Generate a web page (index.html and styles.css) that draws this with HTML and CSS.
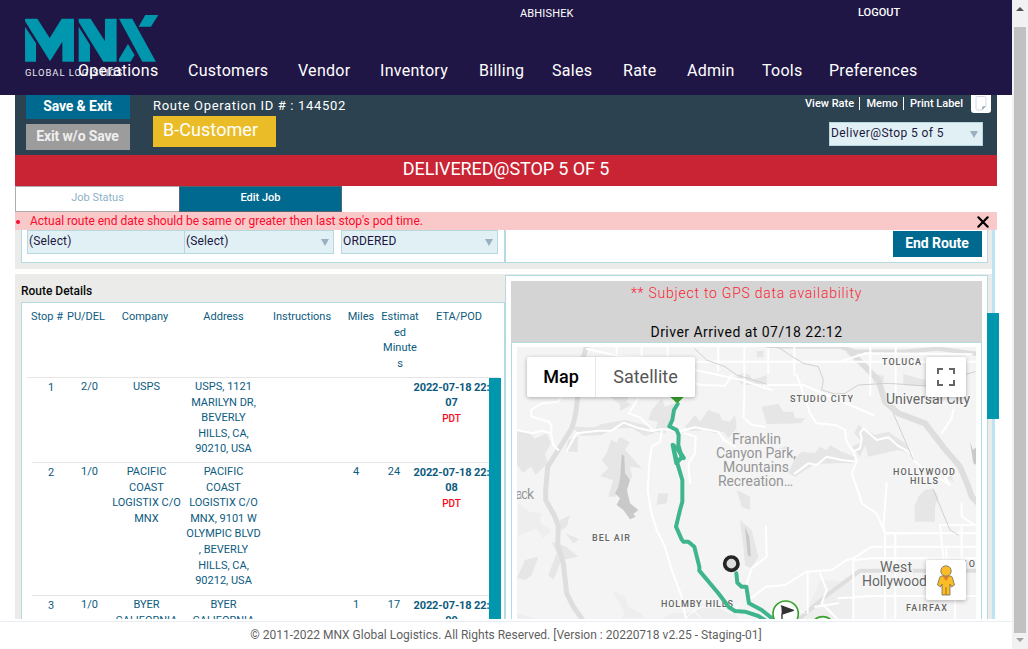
FILE: index.html
```html
<!DOCTYPE html>
<html lang="en">
<head>
<meta charset="utf-8">
<title>MNX Global Logistics</title>
<link rel="stylesheet" href="styles.css">
</head>
<body>
<div class="window">
<div class="page">
  <header class="header">
    <div class="brand">
      <svg class="logo" viewBox="75 45 400 142" aria-label="MNX"><g fill="#0096ad"><path d="M75 56H112L149 114L185 56H222V185H187V125L150 184L75 64ZM75 80L108 130V185H75Z"/><path d="M236 56H272L315 124V56H350V185H310L236 66ZM236 80L270 134V185H236Z"/><path d="M357 56H397L468 185H427ZM384 132L404 165L392 185H357V177ZM436 45H475L453 80H416Z"/></g></svg>
      <div class="tagline">GLOBAL LOGISTICS</div>
    </div>
    <div class="user">ABHISHEK</div>
    <div class="logout">LOGOUT</div>
    <nav class="nav"><a>Operations</a><a>Customers</a><a>Vendor</a><a>Inventory</a><a>Billing</a><a>Sales</a><a>Rate</a><a>Admin</a><a>Tools</a><a>Preferences</a></nav>
  </header>
  <main class="content">
    <section class="toolbar">
      <div class="actions"><button class="btn save">Save &amp; Exit</button><button class="btn exit">Exit w/o Save</button></div>
      <div class="ident"><div class="rid">Route Operation ID # : 144502</div><div class="customer">B-Customer</div></div>
      <div class="tools">
        <div class="links"><a>View Rate</a><a>Memo</a><a>Print Label</a><span class="note"><svg viewBox="0 0 20 18"><path d="M5 2.500Q5 1.500 6 1.500H13.500Q15 1.500 15 3V11L11 15H6.500Q5 15 5 13.500Z" fill="#fff" stroke="#d4d8e4"/><path d="M11 15L11.500 11.500L15 11Z" fill="#8fa3b5"/></svg></span></div>
        <div class="select stopsel"><span>Deliver@Stop 5 of 5</span><i></i></div>
      </div>
    </section>
    <div class="status">DELIVERED@STOP 5 OF 5</div>
    <div class="tabs"><div class="tab">Job Status</div><div class="tab on">Edit Job</div></div>
    <div class="error"><b></b><span>Actual route end date should be same or greater then last stop's pod time.</span>
      <svg class="close" viewBox="0 0 12 12"><path d="M2 2L10 10M10 2L2 10" stroke="#000" stroke-width="1.900" stroke-linecap="round"/></svg></div>
    <div class="scroller">
      <div class="panes">
        <section class="panel route">
          <div class="routebox">
            <div class="fields"><div class="select s1"><span>(Select)</span></div><div class="select s2"><span>(Select)</span><i></i></div><div class="select s3"><span>ORDERED</span><i></i></div></div>
            <div class="endcell"><button class="btn end">End Route</button></div>
          </div>
        </section>
        <section class="panel details">
          <div class="left">
            <h2>Route Details</h2>
            <div class="tablebox">
              <div class="row head"><span>Stop #</span><span>PU/DEL</span><span>Company</span><span>Address</span><span>Instructions</span><span>Miles</span><span>Estimat<br>ed<br>Minute<br>s</span><span>ETA/POD</span></div>
              <div class="body">
                <div class="rows">
                  <div class="row r1"><span class="num">1</span><span>2/0</span><span>USPS</span><span>USPS, 1121<br>MARILYN DR,<br>BEVERLY<br>HILLS, CA,<br>90210, USA</span><span></span><span></span><span></span><span class="eta">2022-07-18 22:<br>07<br><em>PDT</em></span></div>
                  <div class="row r2"><span class="num">2</span><span>1/0</span><span>PACIFIC<br>COAST<br>LOGISTIX C/O<br>MNX</span><span>PACIFIC<br>COAST<br>LOGISTIX C/O<br>MNX, 9101 W<br>OLYMPIC BLVD<br>, BEVERLY<br>HILLS, CA,<br>90212, USA</span><span></span><span>4</span><span>24</span><span class="eta">2022-07-18 22:<br>08<br><em>PDT</em></span></div>
                  <div class="row r3"><span class="num">3</span><span>1/0</span><span>BYER<br>CALIFORNIA</span><span>BYER<br>CALIFORNIA</span><span></span><span>1</span><span>17</span><span class="eta">2022-07-18 22:<br>09</span></div>
                </div>
                <div class="thumb"></div>
              </div>
            </div>
          </div>
          <div class="right">
            <div class="gps"><p class="warn">** Subject to GPS data availability</p><p class="arrived">Driver Arrived at 07/18 22:12</p></div>
            <div class="mapframe"><div class="map">
              <svg class="tiles" viewBox="517 347 459 272">
                <rect x="517" y="347" width="459" height="272" fill="#f4f4f4"/>
                <g transform="translate(505 330) scale(.33333)" fill="none" stroke-linejoin="round" stroke-linecap="round">
                  <g fill="#e6e6e6">
                    <path d="M36 300L75 308L88 326L125 310L138 340L120 372L128 400L92 435L78 410L54 428L36 405ZM190 330L220 318L218 367L180 363ZM200 290L270 292L290 282L360 270L440 290L450 310L420 318L380 294L330 295L290 315L230 318ZM440 240L470 205L480 230L510 220L500 280L480 310L450 305L458 275L430 270ZM315 200H370L364 215L380 223L346 244L344 222ZM540 290L570 255L585 275L610 240L645 252L650 270L675 275L690 255L695 295L670 325L655 305L630 310L600 300L555 304Z"/>
                    <path d="M290 390L305 370L318 330L335 338L345 320L374 336L360 360L410 415L375 410L382 440L330 500H310L324 450L285 438L310 415ZM755 63H775V82H755ZM690 145L715 127L735 135L740 150L785 136V160L715 166Z"/>
                    <path d="M770 230L820 222L835 245L865 245L870 265L900 265L888 280L785 282ZM870 383L890 365L930 370L945 350L965 360L975 345L1010 365L1050 380L1048 400L990 400L930 402L870 440L850 430ZM1040 350L1070 335L1048 310L1060 285L1110 315L1150 305L1200 340L1215 370L1180 360L1090 380L1080 345L1065 380ZM1108 132L1136 138V155L1105 158ZM1195 132L1260 150L1268 170L1195 166ZM1320 420L1340 435L1345 455L1328 448ZM820 357L845 348L848 360Z"/>
                    <path d="M157 575L195 555L185 590L170 600ZM182 610L222 628L205 640ZM183 650L220 680L170 690L145 750L130 735L155 670L140 635ZM36 745L60 690L100 680L80 735L60 750ZM695 480L735 500L735 540L710 530ZM705 570L740 600L760 680L738 715L720 706L715 650ZM1228 530L1240 500L1260 480L1285 475L1300 500L1290 530L1290 575H1230ZM460 490L490 490L485 520L455 525Z"/>
                    <path d="M40 520L75 545L110 550L105 580L140 600L115 625L95 595L40 618ZM320 780L360 800L370 830L405 850L420 865H350L360 850ZM36 850L95 867H36ZM470 867L500 850L565 848L590 820L640 825L690 845L700 867ZM945 750L1045 755L1045 867H900L910 835Z" fill="#eee"/>
                  </g>
                  <path d="M340 470L346 440L350 372L358 378L360 430L375 450L366 480L375 520L400 540L385 552L392 560L375 568L355 540L335 525L345 505L330 490ZM720 590L733 620L738 680L728 675ZM1395 335L1404 360L1415 350V405L1405 400Z" fill="#c9c9c9"/>
                  <g stroke="#dedede" stroke-width="18"><path d="M244 51L230 100L218 180Q217 250 200 295L160 360L128 410L122 480V510L150 560L160 590L158 640L175 700L185 790L205 830L240 880" stroke-width="15"/><path d="M1035 65L1120 150L1140 215L1180 250L1260 280L1318 355L1365 410L1390 470L1400 500L1425 525L1440 535"/><path d="M820 50H1005L1050 65H1200L1300 56L1420 72" stroke-width="13"/><path d="M870 878L960 800L1065 722H1420" stroke-width="12"/></g>
                  <g stroke="#fff" stroke-width="6">
                    <path d="M246 57L340 78L570 95L950 95H1420M335 51V78M410 52V83M488 51V120M570 120L710 150L800 180M640 52V120M718 52V210L715 262L740 285L780 290M790 51V130M868 51V135M1096 51V195M1172 51V190M1005 95L1080 70L1400 73M780 165H895L1105 255M510 145L590 165L660 167L680 135"/>
                    <path d="M36 300L80 310L110 302L138 310L140 290L132 275L80 260L78 240L110 220L160 215L185 178M138 310L145 345L160 360M185 362L215 310L280 302L320 302L355 278L400 294L440 303L470 297L525 304L570 292L640 305L655 328L690 350M400 205L372 250L405 262L445 302M470 304L466 335L440 350L433 400L428 480L438 545L455 600L480 650L500 720L530 800L545 880"/>
                    <path d="M540 310L572 320L570 370L550 400L555 460M870 430L910 400L935 405L965 380L1010 390L1055 395L1045 365L1065 355L1070 325L1065 310L1075 295L1115 330L1150 322L1180 348L1220 370L1225 390L1260 420L1335 465L1320 445L1345 420M1055 395L1040 430L1065 500L1070 520L1115 550L1140 610L1200 610M875 135L895 190L915 250L935 280L995 286L1020 300L1025 335L1048 370L1055 395M1310 310L1340 265L1345 240"/>
                    <path d="M783 770L840 765L905 725L980 720L1025 690L1045 685L1100 650H1410M1140 610H1410M1145 460L1135 590L1140 610V867M1171 610V867M1045 690V870M1324 650V770L1305 585H1410L1370 560V520M1370 585V700M1045 690L1100 685H1410M1000 805L1100 798H1410M908 730V850M945 730L965 780L950 820L1000 870M930 830L1000 820M783 590L785 680L740 715L725 760L730 800M730 810L783 770M1350 790V868"/>
                    <path d="M540 867L570 840L620 820L680 850L705 820M565 840L590 867M820 867L860 830L900 850" stroke-width="3"/>
                  </g>
                  <path d="M570 57L605 90L660 110L695 135L740 148L785 163M785 52H820L870 85L895 100L940 110L955 150L950 180L990 192L1020 190L1060 165L1150 160L1265 168L1410 125M1165 250L1225 390M1285 480L1335 600L1360 615" stroke="#c9c9c9" stroke-width="2.500"/>
                </g>
                <g class="labels">
                  <text x="882" y="365" textLength="39">TOLUCA</text><text x="790" y="402" textLength="63">STUDIO CITY</text><text x="893" y="475" textLength="62">HOLLYWOOD</text><text x="910" y="484" textLength="28">HILLS</text><text x="592" y="541" textLength="38">BEL AIR</text><text x="661" y="607" textLength="72">HOLMBY HILLS</text><text x="906" y="611" textLength="41">FAIRFAX</text><text x="964" y="567" textLength="11">IO</text>
                </g>
                <g class="towns"><text x="886" y="404" textLength="84">Universal City</text><text x="880" y="572" textLength="32">West</text><text x="862" y="586" textLength="65">Hollywood</text></g>
                <g class="parks"><text x="732" y="444" textLength="49">Franklin</text><text x="716" y="458" textLength="80">Canyon Park,</text><text x="723" y="472" textLength="66">Mountains</text><text x="718" y="486" textLength="75">Recreation…</text><text x="515" y="499" textLength="19">ack</text></g>
                <g transform="translate(505 330) scale(.33333)" fill="none" stroke-linejoin="round" stroke-linecap="round">
                  <g stroke="#3fb58d" stroke-width="12"><path d="M518 222L507 240L502 270L493 289L515 300L521 315L520 345L530 382L514 400L503 345L520 410L532 450V515L525 540L513 590L530 628L535 635H550L568 650L583 710V722L600 742L640 790L672 832L690 843L720 845L760 858L820 895"/><path d="M504 345L520 360L536 384" stroke-width="13"/><path d="M694 730L697 758L710 770L724 770L732 820L770 840L820 880"/></g>
                  <circle cx="679" cy="701" r="20" fill="#ddd" stroke="#242424" stroke-width="11"/>
                  <path d="M496 201H536L525 212Q516 224 508 212Z" fill="#39a32f"/>
                  <g fill="#fff" stroke="#39a32f" stroke-width="5"><circle cx="842" cy="851" r="38"/><circle cx="953" cy="896" r="36"/></g>
                  <path d="M829 828L865 841L831 852V867" stroke="#333" stroke-width="4" fill="#333"/>
                </g>
              </svg>
              <div class="maptype"><span>Map</span><span>Satellite</span></div>
              <div class="mapbtn full"><svg viewBox="0 0 18 18"><path d="M1 6V1H6M12 1H17V6M17 12V17H12M6 17H1V12" fill="none" stroke="#666" stroke-width="2"/></svg></div>
              <div class="mapbtn peg"><svg viewBox="0 0 18 31"><g fill="#fbbc26" stroke="#6c6a63" stroke-width=".8"><path d="M4.500 11H13.500Q15 11 15.500 13L17.500 20L14.500 22L13 19V30H5V19L3.500 22L.5 20L2.500 13Q3 11 4.500 11Z"/><circle cx="9" cy="6" r="5.200"/></g><path d="M6 11.400H12L9 16Z" fill="#e37c2c"/><path d="M9 22V30" stroke="#8a641d" stroke-width=".8"/></svg></div>
            </div></div>
          </div>
        </section>
      </div>
      <div class="track"><div class="handle"></div></div>
    </div>
  </main>
  <footer class="footer">© 2011-2022 MNX Global Logistics. All Rights Reserved. [Version : 20220718 v2.25 - Staging-01]</footer>
</div>
<div class="winbar"><i class="up"></i><div class="grip"></div><i class="down"></i></div>
</div>
</body>
</html>
```
FILE: styles.css
```css
* { box-sizing: border-box; }
body { margin: 0; font-family: Roboto, sans-serif; background: #fff; overflow: hidden; }
h2, p { margin: 0; }
button { border: 0; padding: 0; font-family: inherit; }
svg { display: block; }
.window { display: flex; width: 1028px; height: 649px; }
.page { width: 1012px; display: flex; flex-direction: column; }
.header { position: relative; height: 95px; flex: none; background: #1f1646; color: #fff; display: flex; }
.brand { padding: 15px 0 0 25px; width: 520px; }
.logo { width: 133.3px; height: 47.3px; }
.tagline { font-size: 9.5px; line-height: 12px; padding-top: 5px; letter-spacing: .9px; opacity: .9; white-space: nowrap; }
.user { width: 338px; padding-top: 7px; font-size: 11px; line-height: 13px; letter-spacing: .15px; }
.logout { padding-top: 6px; font-size: 11px; line-height: 13px; font-weight: 500; }
.nav { position: absolute; left: 78px; top: 61px; display: grid; grid-template-columns: 80px 80px 52px 69px 43px 41px 34px 45px 37px 92px; gap: 30px; font-size: 16px; line-height: 20px; letter-spacing: .28px; white-space: nowrap; }
.content { width: 982px; margin-left: 15px; height: 524px; flex: none; display: flex; flex-direction: column; }
.toolbar { height: 60px; flex: none; background: #2c4251; color: #fff; display: flex; }
.actions { width: 138px; padding-left: 11px; display: flex; flex-direction: column; gap: 5px; }
.btn { width: 104px; height: 26px; color: #fff; font-size: 14px; font-weight: 700; line-height: 25px; letter-spacing: -.15px; text-align: center; padding-right: 1px; }
.save { background: #006990; height: 24px; line-height: 20px; padding-bottom: 2px; }
.exit { background: #9c9c9c; color: #efefef; padding-bottom: 1px; }
.ident { width: 638px; }
.rid { height: 21px; line-height: 21px; font-size: 13px; letter-spacing: .68px; }
.customer { width: 123px; height: 31px; background: #eabd28; padding-left: 10px; font-size: 18px; line-height: 27px; letter-spacing: .05px; }
.tools { display: flex; flex-direction: column; gap: 9px; }
.links { display: flex; height: 18px; padding-left: 14px; font-size: 11px; line-height: 17px; font-weight: 500; white-space: nowrap; }
.links a { position: relative; padding-right: 12.300px; }
.links a + a::before { content: ""; position: absolute; left: -7px; top: 2px; width: 1px; height: 13px; background: #fff; }
.links a:nth-child(3) { padding-right: 8px; }
.note { width: 20px; height: 18px; background: #fff; border-radius: 0 0 3px 3px; }
.select { height: 24px; border: 1px solid #b5d9df; background: #e1f0f4; color: #1c1742; font-size: 12px; line-height: 20px; padding: 0 4px 0 1px; display: flex; justify-content: space-between; letter-spacing: .15px; }
.select i { margin-top: 8px; width: 8px; height: 7px; background: #98b0c0; clip-path: polygon(0 0, 100% 0, 50% 100%); }
.stopsel { width: 154px; margin-left: 38px; letter-spacing: .42px; }
.status { height: 31px; flex: none; background: #c82434; color: #fff; text-align: center; font-size: 18px; line-height: 27px; letter-spacing: -.1px; }
.tabs { height: 26px; flex: none; display: flex; font-size: 11px; line-height: 21px; text-align: center; }
.tab { width: 164px; border: 1px solid #adadad; border-right: 0; color: #8db3c8; }
.tab.on { width: 163px; background: #006990; border: 1px solid #58646d; color: #fff; font-weight: 500; }
.error { height: 18px; flex: none; display: flex; align-items: center; background: #f9c9c9; color: #fa0a2d; font-size: 12px; line-height: 18px; padding-left: 1px; }
.error b { width: 4px; height: 4px; border-radius: 2px; background: #fa0a2d; margin-right: 10px; margin-top: 2px; }
.close { width: 14px; height: 14px; margin-left: auto; margin-right: 7px; margin-top: 2px; }
.scroller { display: flex; height: 389px; }
.panes { width: 977px; display: flex; flex-direction: column; gap: 5px; overflow: hidden; }
.panel { background: #ebecea; }
.route { height: 39px; flex: none; padding: 0 4px 6px 6px; }
.routebox { height: 33px; display: flex; background: #fff; border: 1px solid #b5dbe2; border-top: 0; }
.fields { width: 484px; border-right: 2px solid #b5dbe2; padding-left: 5px; display: flex; }
.s1 { width: 158px; }
.s2 { width: 150px; margin-left: -1px; }
.s3 { width: 157px; margin-left: 7px; }
.endcell { flex: 1; display: flex; justify-content: flex-end; padding: 1px 5px 0 0; }
.end { width: 89px; background: #006990; padding-bottom: 1px; letter-spacing: -.05px; }
.details { height: 345px; display: flex; padding-left: 6px; }
.left { width: 484px; }
h2 { height: 28px; padding-top: 9px; font-size: 12px; line-height: 16px; font-weight: 500; color: #080808; letter-spacing: -.02px; }
.tablebox { height: 317px; background: #fff; border: 1px solid #b5dbe2; border-width: 1px 1px 0; padding: 0 5px; color: #0c5b80; font-size: 11px; line-height: 15.600px; text-align: center; }
.row { display: grid; grid-template-columns: 38px 39px 75px 79px 75px 36px 40px 75px; white-space: nowrap; padding-top: 1px; }
.row span { justify-self: center; }
.head { height: 75px; padding-top: 6px; border-bottom: 1px solid #e5e5e5; grid-template-columns: 40px 38px 80px 77px 80px 38px 40px 78px; }
.body { display: flex; height: 241px; }
.rows { width: 462px; flex: none; overflow: hidden; }
.body .row { margin-left: 5px; border-bottom: 1px solid #e5e5e5; }
.r1 { height: 85px; }
.r2, .r3 { height: 133px; }
.num { padding-top: .5px; }
.eta { font-weight: 700; letter-spacing: -.12px; padding-top: .6px; }
.eta em { font-style: normal; font-weight: 500; font-size: 10px; color: #fa0a20; }
.thumb { width: 12px; flex: none; background: #0096ad; }
.right { width: 483px; height: 344px; margin-top: 1px; background: #fff; border: 1px solid #b5dbe2; border-bottom: 0; padding: 5px; }
.gps { height: 61px; background: #d4d4d4; text-align: center; white-space: nowrap; }
.warn { color: #fa1e32; font-size: 14px; font-weight: 300; line-height: 18px; padding-top: 3px; letter-spacing: .76px; }
.arrived { color: #080808; font-size: 14px; line-height: 18px; padding-top: 21px; letter-spacing: .47px; }
.mapframe { border: 1px solid #b5dbe2; border-bottom: 0; padding: 4px 5px 0; height: 277px; }
.map { position: relative; width: 459px; height: 272px; overflow: hidden; }
.tiles { width: 459px; height: 272px; }
.labels { font-size: 9px; font-weight: 500; fill: #656565; stroke: #f8f8f8; stroke-width: 2px; paint-order: stroke; }
.towns { font-size: 14px; fill: #666; stroke: #f8f8f8; stroke-width: 2px; paint-order: stroke; }
.parks { font-size: 14px; fill: #969696; stroke: #f4f4f4; stroke-width: 2px; paint-order: stroke; }
.maptype { position: absolute; left: 10px; top: 10px; display: flex; width: 168px; height: 40px; background: #fff; border-radius: 2px; box-shadow: 0 1px 4px rgba(0,0,0,.3); font-size: 18px; line-height: 40px; text-align: center; color: #565656; }
.maptype span:first-child { width: 69px; font-weight: 500; color: #000; border-right: 1px solid #e8e8e8; }
.maptype span:last-child { flex: 1; }
.mapbtn { position: absolute; left: 409px; width: 40px; height: 40px; background: #fff; border-radius: 2px; box-shadow: 0 1px 4px rgba(0,0,0,.3); display: flex; justify-content: center; align-items: center; }
.full { top: 10px; }
.peg { top: 213px; }
.full svg { width: 18px; height: 18px; }
.peg svg { width: 18px; height: 31px; }
.track { position: relative; width: 3px; height: 389px; background: #bde4f0; }
.handle { position: absolute; left: -5px; top: 83px; width: 12px; height: 106px; background: #0096ad; }
.footer { height: 28px; margin-top: 2px; border-top: 1px solid #e8eef4; text-align: center; font-size: 12px; line-height: 26px; color: #5f5f5f; }
.winbar { width: 16px; background: #f1f1f1; display: flex; flex-direction: column; align-items: center; }
.up { width: 8px; height: 4px; margin: 7px 0 16px; background: #505050; clip-path: polygon(50% 0, 100% 100%, 0 100%); }
.grip { width: 12px; height: 606px; background: #c1c1c1; }
.down { width: 8px; height: 4px; margin-top: 5px; background: #a3a3a3; clip-path: polygon(0 0, 100% 0, 50% 100%); }
```
